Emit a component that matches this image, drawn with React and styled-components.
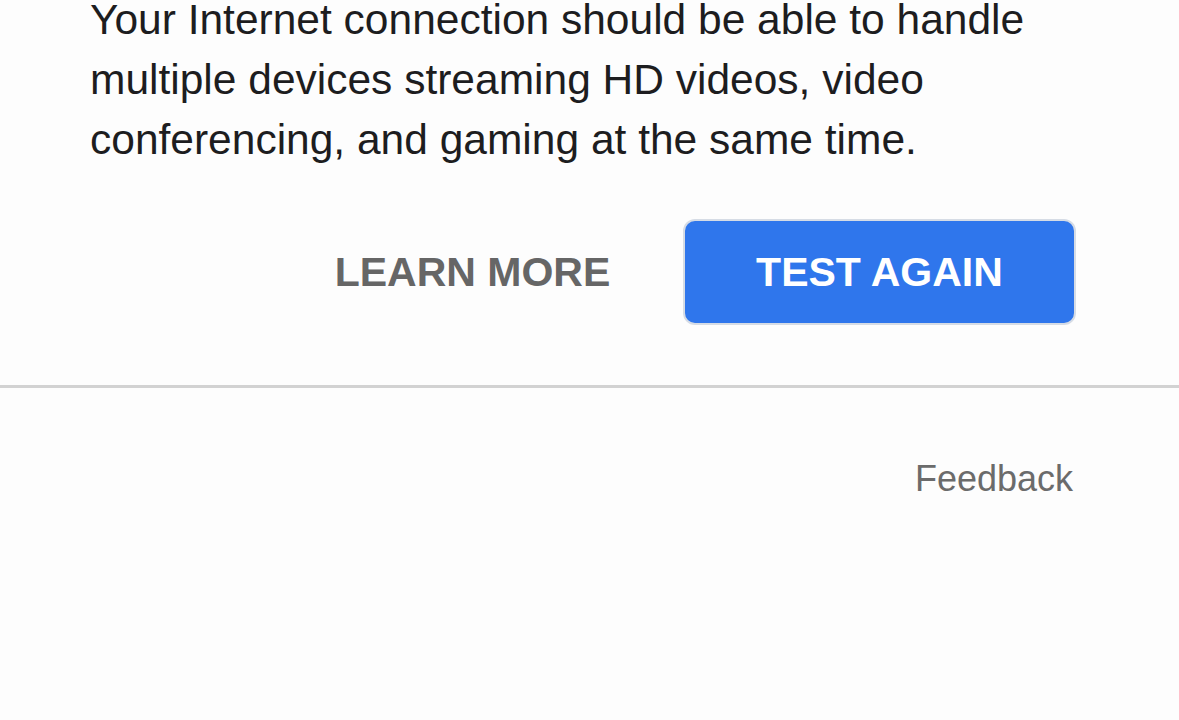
import React from "react";
import styled, { createGlobalStyle } from "styled-components";

const GlobalStyle = createGlobalStyle`
  html, body {
    margin: 0;
    padding: 0;
    background: #fdfdfd;
    font-family: "Liberation Sans", Arial, sans-serif;
    overflow: hidden;
  }
  * { box-sizing: border-box; }
`;

const Page = styled.div`
  width: 1179px;
  min-height: 720px;
  background: #fdfdfd;
`;

const Content = styled.section`
  padding: 0 90px;
`;

const Description = styled.p`
  margin: -10px 0 0;
  font-size: 42.5px;
  line-height: 60px;
  color: #1d1d1f;
`;

const Actions = styled.div`
  display: flex;
  justify-content: flex-end;
  gap: 14px;
  margin: 49px 13px 0 0;
`;

const Button = styled.button`
  width: 393px;
  height: 106px;
  border-radius: 12px;
  border: 2px solid ${(p) => (p.$primary ? "#d6dce5" : "transparent")};
  background: ${(p) => (p.$primary ? "#2f76ec" : "transparent")};
  color: ${(p) => (p.$primary ? "#ffffff" : "#666666")};
  font-family: "Liberation Sans", Arial, sans-serif;
  font-weight: 700;
  font-size: 41px;
  line-height: 1;
  padding: 0;
  display: flex;
  align-items: center;
  justify-content: center;
  cursor: pointer;
`;

const Divider = styled.hr`
  margin: 60px 0 0;
  border: 0;
  height: 3px;
  background: #d2d2d2;
`;

const Footer = styled.footer`
  display: flex;
  justify-content: flex-end;
  padding: 70px 106px 0 0;
`;

const FeedbackLink = styled.a`
  font-size: 36px;
  line-height: 1.15;
  color: #6b6b6b;
  text-decoration: none;
  cursor: pointer;
`;

export default function App() {
  return (
    <>
      <GlobalStyle />
      <Page>
        <Content>
          <Description>
            Your Internet connection should be able to handle multiple devices
            streaming HD videos, video conferencing, and gaming at the same
            time.
          </Description>
          <Actions>
            <Button>LEARN MORE</Button>
            <Button $primary>TEST AGAIN</Button>
          </Actions>
        </Content>
        <Divider />
        <Footer>
          <FeedbackLink>Feedback</FeedbackLink>
        </Footer>
      </Page>
    </>
  );
}
